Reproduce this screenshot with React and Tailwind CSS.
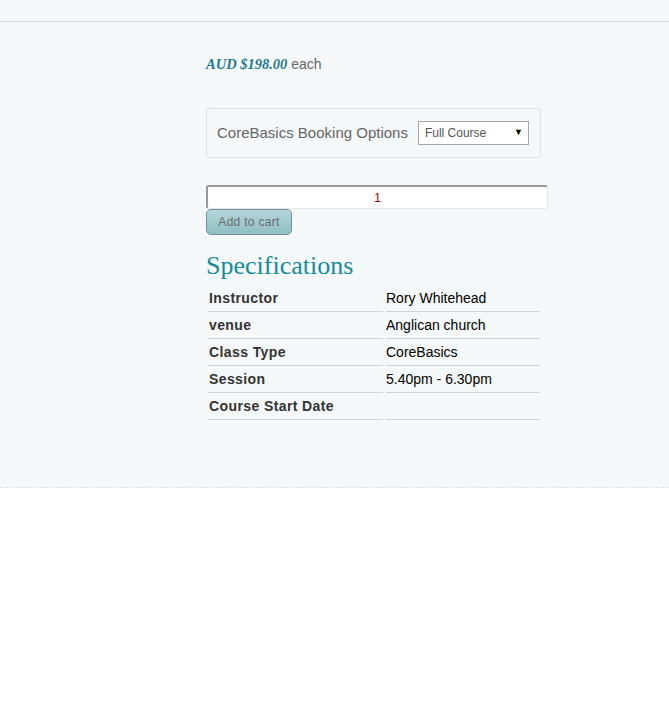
export default function App() {
  const specs = [
    ["Instructor", "Rory Whitehead"],
    ["venue", "Anglican church"],
    ["Class Type", "CoreBasics"],
    ["Session", "5.40pm - 6.30pm"],
    ["Course Start Date", ""],
  ];

  return (
    <div className="min-h-[727px] bg-white font-['Liberation_Sans',Arial,sans-serif]">
      <div className="h-[22px] border-b border-[#d9dcdf] bg-[#f5f8f9]" />
      <div className="border-b border-dashed border-[#e2e4e4] bg-[#f5f8f9] pb-[67px] pl-[206px] pt-[32px]">
        <div className="h-[20px] text-[14px] leading-[20px]">
          <span className="font-['Liberation_Serif',serif] text-[14.5px] font-bold italic text-[#1f7a8b]">AUD $198.00</span>
          <span className="text-[#666]"> each</span>
        </div>

        <div className="mt-[34px] flex h-[50px] w-[335px] items-center rounded-[3px] border border-[#dfe2e4] pl-[10px]">
          <span className="text-[15px] text-[#666]">CoreBasics Booking Options</span>
          <div className="ml-[10px] flex h-[24px] w-[111px] items-center justify-between border border-[#a6a6a6] bg-white pl-[6px] pr-[5px] text-[12px] text-[#555]">
            <span>Full Course</span>
            <span className="text-[9px] text-black">▼</span>
          </div>
        </div>

        <div className="mt-[27px] flex h-[24px] w-[342px] items-center justify-center rounded-[3px] border border-[#e6e6e6] border-t-2 border-l-2 border-t-[#999] border-l-[#999] bg-white text-[12px] text-[#a00000]">
          1
        </div>
        <button className="flex h-[26px] w-[86px] items-center justify-center rounded-[5px] border border-[#6f9496] bg-gradient-to-b from-[#b6d6da] to-[#8fbec3] text-[12px] tracking-[0.3px] text-[#6b6b6b]">
          Add to cart
        </button>

        <h2 className="mt-[15px] font-['Liberation_Serif',serif] text-[26px] leading-[32px] text-[#178b99]">
          Specifications
        </h2>

        <table className="-ml-px mt-[3px] border-separate border-spacing-x-[3px] border-spacing-y-0">
          <tbody>
            {specs.map(([k, v]) => (
              <tr key={k}>
                <td className="h-[27px] w-[175px] border-b border-[#cfd3d3] pl-[1px] text-[14px] font-bold tracking-[0.4px] text-[#333]">
                  {k}
                </td>
                <td className="h-[27px] w-[154px] border-b border-[#cfd3d3] text-[14px] text-black">
                  {v}
                </td>
              </tr>
            ))}
          </tbody>
        </table>
      </div>
    </div>
  );
}
